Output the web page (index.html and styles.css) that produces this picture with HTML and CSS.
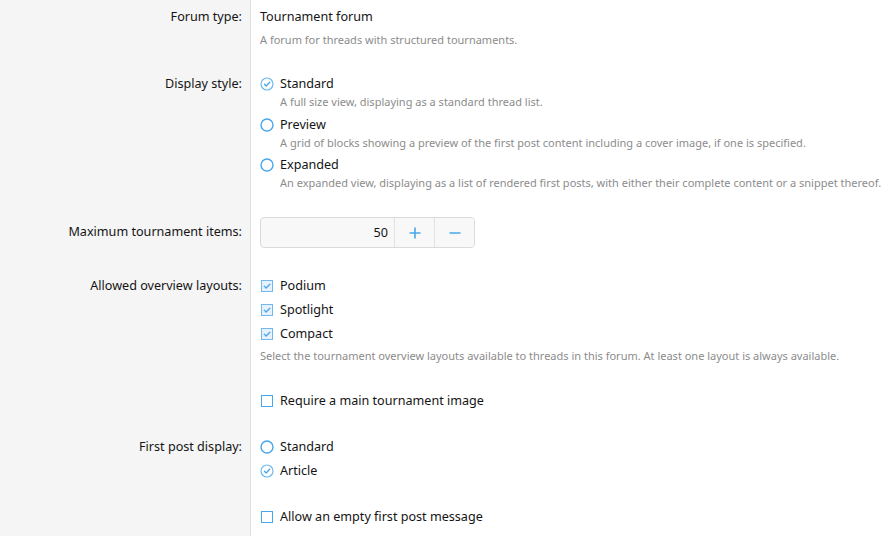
FILE: index.html
```html
<!DOCTYPE html>
<html lang="en">
<head>
<meta charset="utf-8">
<title>Forum options</title>
<link rel="stylesheet" href="styles.css">
</head>
<body>
<div class="form">
  <div class="row row-first">
    <div class="label">Forum type:</div>
    <div class="field">
      <div class="text">Tournament forum</div>
      <div class="explain">A forum for threads with structured tournaments.</div>
    </div>
  </div>

  <div class="row row-display">
    <div class="label">Display style:</div>
    <div class="field">
      <div class="choice choice-hint">
        <span class="icon radio on"><svg viewBox="0 0 14 14"><circle cx="7" cy="7" r="6" /><path d="M4.4 7.2 L6.2 9 L9.7 5.3" /></svg></span>
        <div>
          <div class="text">Standard</div>
          <div class="hint">A full size view, displaying as a standard thread list.</div>
        </div>
      </div>
      <div class="choice choice-hint">
        <span class="icon radio"><svg viewBox="0 0 14 14"><circle cx="7" cy="7" r="6" /></svg></span>
        <div>
          <div class="text">Preview</div>
          <div class="hint">A grid of blocks showing a preview of the first post content including a cover image, if one is specified.</div>
        </div>
      </div>
      <div class="choice choice-hint">
        <span class="icon radio"><svg viewBox="0 0 14 14"><circle cx="7" cy="7" r="6" /></svg></span>
        <div>
          <div class="text">Expanded</div>
          <div class="hint">An expanded view, displaying as a list of rendered first posts, with either their complete content or a snippet thereof.</div>
        </div>
      </div>
    </div>
  </div>

  <div class="row row-input">
    <div class="label label-input">Maximum tournament items:</div>
    <div class="field">
      <div class="spinner">
        <div class="spin-value">50</div>
        <button class="spin-btn" type="button"><svg viewBox="0 0 12 12"><path d="M6 0.5 V11.5 M0.5 6 H11.5" /></svg></button>
        <button class="spin-btn" type="button"><svg viewBox="0 0 12 12"><path d="M0.5 6 H11.5" /></svg></button>
      </div>
    </div>
  </div>

  <div class="row">
    <div class="label">Allowed overview layouts:</div>
    <div class="field">
      <div class="choice">
        <span class="icon check on"><svg viewBox="0 0 12 12"><rect x="0.5" y="0.5" width="11" height="11" /><path d="M3.2 6.1 L5.1 8 L8.8 4.2" /></svg></span>
        <div class="text">Podium</div>
      </div>
      <div class="choice">
        <span class="icon check on"><svg viewBox="0 0 12 12"><rect x="0.5" y="0.5" width="11" height="11" /><path d="M3.2 6.1 L5.1 8 L8.8 4.2" /></svg></span>
        <div class="text">Spotlight</div>
      </div>
      <div class="choice">
        <span class="icon check on"><svg viewBox="0 0 12 12"><rect x="0.5" y="0.5" width="11" height="11" /><path d="M3.2 6.1 L5.1 8 L8.8 4.2" /></svg></span>
        <div class="text">Compact</div>
      </div>
      <div class="explain explain-list">Select the tournament overview layouts available to threads in this forum. At least one layout is always available.</div>
    </div>
  </div>

  <div class="row">
    <div class="label"></div>
    <div class="field">
      <div class="choice">
        <span class="icon check"><svg viewBox="0 0 12 12"><rect x="0.5" y="0.5" width="11" height="11" /></svg></span>
        <div class="text">Require a main tournament image</div>
      </div>
    </div>
  </div>

  <div class="row">
    <div class="label">First post display:</div>
    <div class="field">
      <div class="choice">
        <span class="icon radio"><svg viewBox="0 0 14 14"><circle cx="7" cy="7" r="6" /></svg></span>
        <div class="text">Standard</div>
      </div>
      <div class="choice">
        <span class="icon radio on"><svg viewBox="0 0 14 14"><circle cx="7" cy="7" r="6" /><path d="M4.4 7.2 L6.2 9 L9.7 5.3" /></svg></span>
        <div class="text">Article</div>
      </div>
    </div>
  </div>

  <div class="row">
    <div class="label"></div>
    <div class="field">
      <div class="choice">
        <span class="icon check"><svg viewBox="0 0 12 12"><rect x="0.5" y="0.5" width="11" height="11" /></svg></span>
        <div class="text">Allow an empty first post message</div>
      </div>
    </div>
  </div>
</div>
</body>
</html>
```

FILE: styles.css
```css
html, body {
  margin: 0;
  padding: 0;
  background: #ffffff;
}

body {
  font-family: "Noto Sans", "Open Sans", "DejaVu Sans", sans-serif;
  font-size: 12.6px;
  color: #141414;
  height: 536px;
  overflow: hidden;
}

.form {
  display: flex;
  flex-direction: column;
  min-height: 536px;
  background: linear-gradient(to right, #f5f5f5 0, #f5f5f5 250px, #dfdfdf 250px, #dfdfdf 251px, #ffffff 251px);
}

.row {
  display: grid;
  grid-template-columns: 251px 1fr;
  padding: 14px 0 14px 0;
}

.row-first {
  padding-top: 8px;
  padding-bottom: 13px;
}

.row-display {
  padding-bottom: 12px;
}

.row-input {
  padding-bottom: 15px;
}

.label {
  text-align: right;
  padding-right: 9px;
  line-height: 18px;
  color: #141414;
}

.label-input {
  padding-top: 6px;
}

.field {
  padding-left: 9px;
  display: flex;
  flex-direction: column;
  gap: 6px;
}

.row-display .field {
  gap: 5.5px;
}

.text {
  line-height: 18px;
  color: #141414;
}

.explain {
  font-size: 11px;
  line-height: 16px;
  color: #8c8c8c;
}

.explain-list {
  margin-top: -1px;
}

.choice {
  display: flex;
  align-items: flex-start;
}

.hint {
  font-size: 11px;
  line-height: 16px;
  color: #8c8c8c;
  margin-top: 1px;
}

.icon {
  width: 20px;
  height: 18px;
  flex: none;
  display: flex;
  align-items: center;
}

.radio svg {
  width: 14px;
  height: 14px;
  overflow: visible;
}

.radio circle {
  fill: none;
  stroke: #47a7eb;
  stroke-width: 1.4;
}

.radio.on circle {
  stroke: #6fb9ef;
  stroke-width: 1.2;
}

.radio path,
.check path {
  fill: none;
  stroke: #47a7eb;
  stroke-width: 1.3;
  stroke-linecap: round;
  stroke-linejoin: round;
}

.check svg {
  width: 12px;
  height: 12px;
  margin-left: 1px;
}

.check rect {
  fill: #ffffff;
  stroke: #47a7eb;
  stroke-width: 1;
}

.check.on rect {
  fill: #e7f2fc;
  stroke: #6fb9ef;
}

.spinner {
  display: flex;
  width: 215px;
  height: 31px;
  box-sizing: border-box;
  border: 1px solid #dadada;
  border-radius: 4px;
  background: #f8f8f8;
  overflow: hidden;
}

.spin-value {
  flex: 1;
  text-align: right;
  padding-right: 6px;
  line-height: 29px;
  color: #141414;
}

.spin-btn {
  width: 40px;
  flex: none;
  border: none;
  border-left: 1px solid #e2e2e2;
  background: #f8f8f8;
  padding: 0;
  margin: 0;
  display: flex;
  align-items: center;
  justify-content: center;
}

.spin-btn svg {
  width: 12px;
  height: 12px;
}

.spin-btn path {
  fill: none;
  stroke: #47a7eb;
  stroke-width: 1.6;
}
```
